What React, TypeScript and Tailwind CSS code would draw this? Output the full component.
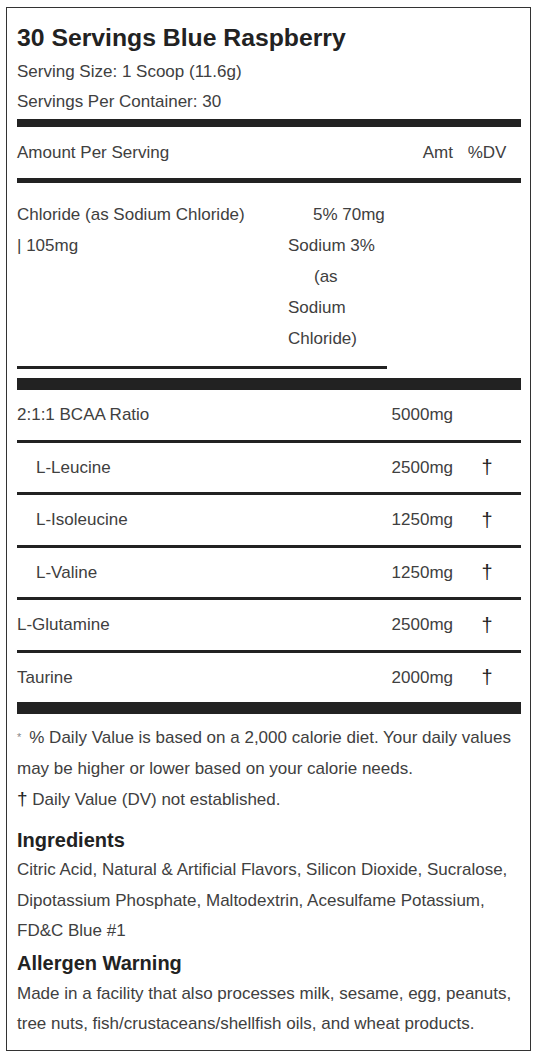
const rows = [
  { name: '2:1:1 BCAA Ratio', amt: '5000mg', dv: '', indent: false },
  { name: 'L-Leucine', amt: '2500mg', dv: '†', indent: true },
  { name: 'L-Isoleucine', amt: '1250mg', dv: '†', indent: true },
  { name: 'L-Valine', amt: '1250mg', dv: '†', indent: true },
  { name: 'L-Glutamine', amt: '2500mg', dv: '†', indent: false },
  { name: 'Taurine', amt: '2000mg', dv: '†', indent: false },
];

export default function App() {
  return (
    <div className="w-full bg-white px-[6px] pt-[7px] pb-[4px] font-['Liberation_Sans',Arial,sans-serif] text-[17px] text-[#404040]">
      <div className="border border-[#333] pl-[10px] pr-[9px] pt-[15px] pb-[11px]">
        {/* titulo + porcao */}
        <h1 className="text-[24.75px] leading-[30px] font-bold text-[#222] mb-[4px]">30 Servings Blue Raspberry</h1>
        <p className="leading-[30px]">Serving Size: 1 Scoop (11.6g)</p>
        <p className="leading-[30px]">Servings Per Container: 30</p>
        <div className="mt-[2px] h-[8px] bg-[#222]"></div>

        <div className="flex h-[51px] items-center">
          <span className="flex-1">Amount Per Serving</span>
          <span className="text-right">Amt</span>
          <span className="w-[68px] text-center">%DV</span>
        </div>
        <div className="h-[5px] bg-[#222]"></div>

        {/* linha quebrada do cloreto */}
        <div className="pt-[16px] flex leading-[31px]">
          <div className="w-[271px]">
            <p>Chloride (as Sodium Chloride)</p>
            <p>| 105mg</p>
          </div>
          <div>
            <p className="pl-[25px]">5% 70mg</p>
            <p>Sodium 3%</p>
            <p className="pl-[26px]">(as</p>
            <p>Sodium</p>
            <p>Chloride)</p>
          </div>
        </div>
        <div className="mt-[12px] h-[3px] w-[370px] bg-[#222]"></div>
        <div className="mt-[9px] h-[12px] bg-[#222]"></div>

        {rows.map((r, i) => (
          <div key={r.name}>
            {i > 0 && <div className="h-[3px] bg-[#222]"></div>}
            <div className="flex h-[49.5px] items-center">
              <span className={r.indent ? 'flex-1 pl-[19px]' : 'flex-1'}>{r.name}</span>
              <span className="text-right">{r.amt}</span>
              <span className="w-[68px] text-center text-[20px] text-[#222]">{r.dv}</span>
            </div>
          </div>
        ))}
        <div className="h-[12px] bg-[#222]"></div>

        <div className="pt-[8px] leading-[31px]">
          <p>
            <span className="text-[11px] align-top text-[#888] mr-[8px]">*</span>% Daily Value is based on a 2,000 calorie diet. Your daily values
            <br />
            may be higher or lower based on your calorie needs.
          </p>
          <p className="h-[31px]">
            <span className="text-[19px] leading-none text-[#222]">†</span> Daily Value (DV) not established.
          </p>
        </div>

        <h2 className="mt-[10px] text-[20px] leading-[30px] font-bold text-[#222]">Ingredients</h2>
        <p className="leading-[30.5px]">
          Citric Acid, Natural &amp; Artificial Flavors, Silicon Dioxide, Sucralose,
          <br />
          Dipotassium Phosphate, Maltodextrin, Acesulfame Potassium,
          <br />
          FD&amp;C Blue #1
        </p>
        <h2 className="text-[20px] leading-[32px] font-bold text-[#222]">Allergen Warning</h2>
        <p className="leading-[30px]">
          Made in a facility that also processes milk, sesame, egg, peanuts,
          <br />
          tree nuts, fish/crustaceans/shellfish oils, and wheat products.
        </p>
      </div>
    </div>
  );
}
